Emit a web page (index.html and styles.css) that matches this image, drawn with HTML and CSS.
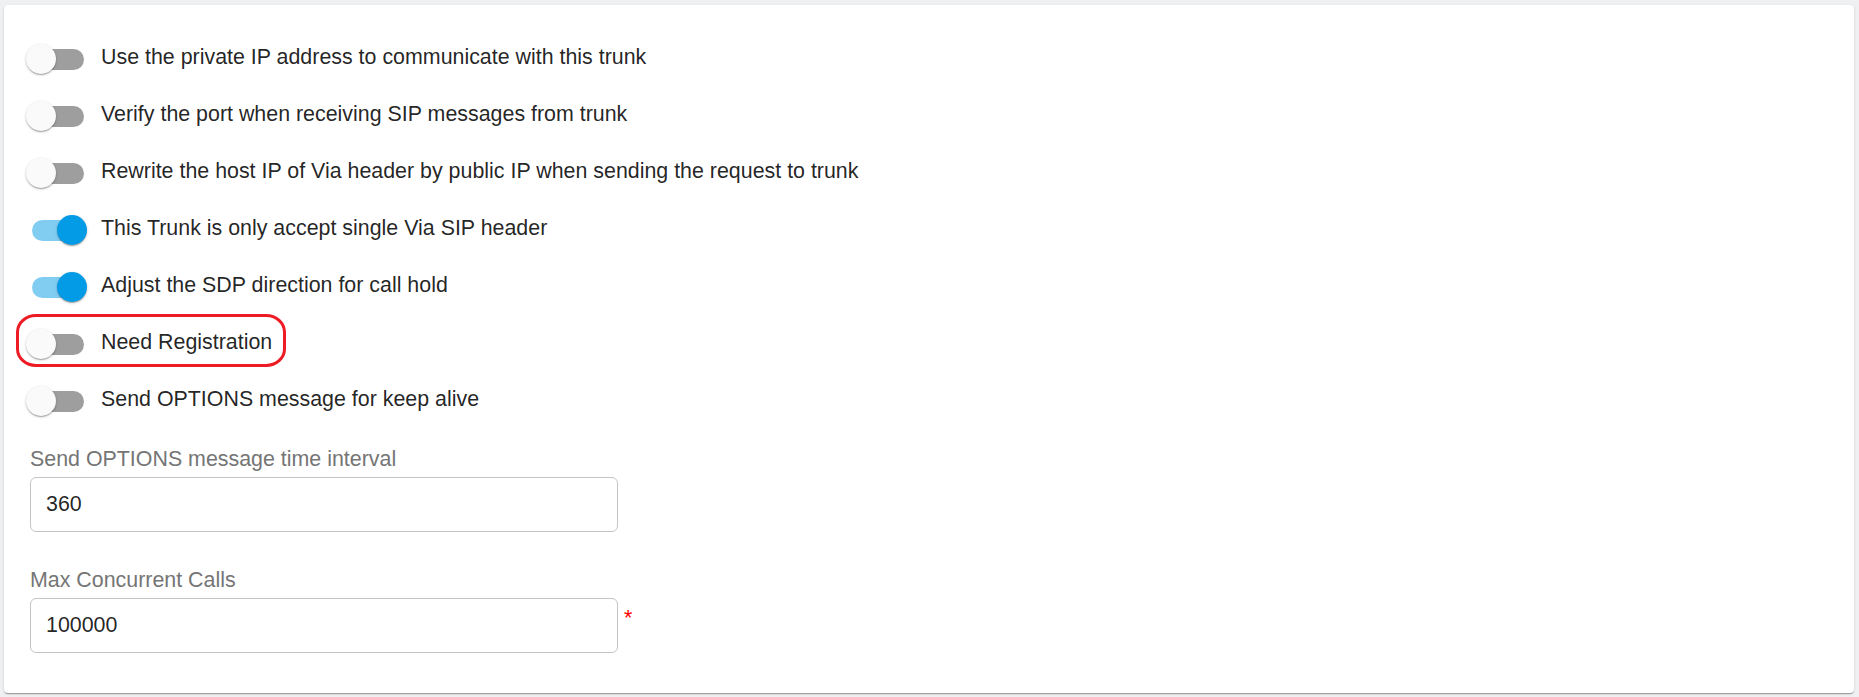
FILE: index.html
```html
<!DOCTYPE html>
<html lang="en">
<head>
<meta charset="utf-8">
<title>Trunk settings</title>
<link rel="stylesheet" href="styles.css">
</head>
<body>
<div class="card">
  <div class="toggles">
    <div class="row">
      <span class="switch"><span class="track"></span><span class="thumb"></span></span>
      <span class="label">Use the private IP address to communicate with this trunk</span>
    </div>
    <div class="row">
      <span class="switch"><span class="track"></span><span class="thumb"></span></span>
      <span class="label">Verify the port when receiving SIP messages from trunk</span>
    </div>
    <div class="row">
      <span class="switch"><span class="track"></span><span class="thumb"></span></span>
      <span class="label">Rewrite the host IP of Via header by public IP when sending the request to trunk</span>
    </div>
    <div class="row">
      <span class="switch on"><span class="track"></span><span class="thumb"></span></span>
      <span class="label">This Trunk is only accept single Via SIP header</span>
    </div>
    <div class="row">
      <span class="switch on"><span class="track"></span><span class="thumb"></span></span>
      <span class="label">Adjust the SDP direction for call hold</span>
    </div>
    <div class="row">
      <span class="switch"><span class="track"></span><span class="thumb"></span></span>
      <span class="label">Need Registration</span>
      <span class="annotation"></span>
    </div>
    <div class="row">
      <span class="switch"><span class="track"></span><span class="thumb"></span></span>
      <span class="label">Send OPTIONS message for keep alive</span>
    </div>
  </div>

  <div class="field">
    <div class="field-label">Send OPTIONS message time interval</div>
    <div class="field-row">
      <input class="text-input" type="text" value="360" readonly>
    </div>
  </div>

  <div class="field second">
    <div class="field-label">Max Concurrent Calls</div>
    <div class="field-row">
      <input class="text-input" type="text" value="100000" readonly>
      <span class="required">*</span>
    </div>
  </div>
</div>
</body>
</html>
```

FILE: styles.css
```css
html, body {
  margin: 0;
  padding: 0;
}

body {
  background: #eff0f2;
  font-family: "Liberation Sans", Arial, sans-serif;
  font-size: 21.4px;
  color: rgba(0, 0, 0, 0.87);
  width: 1859px;
  height: 697px;
  overflow: hidden;
}

.card {
  box-sizing: border-box;
  margin: 5px 0 0 4px;
  width: 1850px;
  height: 688px;
  background: #ffffff;
  border-radius: 4px;
  box-shadow: 0 2px 1px -1px rgba(0, 0, 0, 0.2), 0 1px 1px 0 rgba(0, 0, 0, 0.14), 0 1px 3px 0 rgba(0, 0, 0, 0.12);
  padding: 25px 0 0 9px;
}

.toggles {
  display: flex;
  flex-direction: column;
}

.row {
  position: relative;
  display: flex;
  align-items: center;
  height: 57px;
}

.switch {
  position: relative;
  flex: 0 0 auto;
  width: 88px;
  height: 57px;
}

.track {
  position: absolute;
  left: 18.5px;
  top: 18.5px;
  width: 52px;
  height: 21px;
  border-radius: 10.5px;
  background: #9e9e9e;
}

.thumb {
  position: absolute;
  left: 13px;
  top: 14px;
  width: 30px;
  height: 30px;
  border-radius: 50%;
  background: #fafafa;
  box-shadow: 0 1px 3px 0 rgba(0, 0, 0, 0.2), 0 1px 1px 0 rgba(0, 0, 0, 0.14), 0 2px 1px -1px rgba(0, 0, 0, 0.12);
}

.switch.on .track {
  background: #81cdf2;
}

.switch.on .thumb {
  left: 44px;
  background: #039be5;
}

.label {
  line-height: 24px;
  padding-bottom: 3px;
  white-space: nowrap;
}

.annotation {
  position: absolute;
  left: 3px;
  top: -1px;
  width: 270px;
  height: 53px;
  box-sizing: border-box;
  border: 3px solid #ed1c24;
  border-radius: 20px / 18px;
  pointer-events: none;
}

.field {
  margin: 18px 0 0 17px;
}

.field.second {
  margin-top: 36px;
}

.field-label {
  line-height: 24px;
  color: #757575;
  margin-bottom: 6px;
}

.field-row {
  display: flex;
  align-items: flex-start;
}

.text-input {
  box-sizing: border-box;
  width: 588px;
  height: 55px;
  margin: 0;
  padding: 0 0 0 15px;
  border: 1px solid #c4c4c4;
  border-radius: 6px;
  background: #ffffff;
  font-family: "Liberation Sans", Arial, sans-serif;
  font-size: 21.4px;
  color: rgba(0, 0, 0, 0.87);
  outline: none;
}

.required {
  color: #ff0000;
  line-height: 24px;
  margin: 8px 0 0 6px;
}
```
